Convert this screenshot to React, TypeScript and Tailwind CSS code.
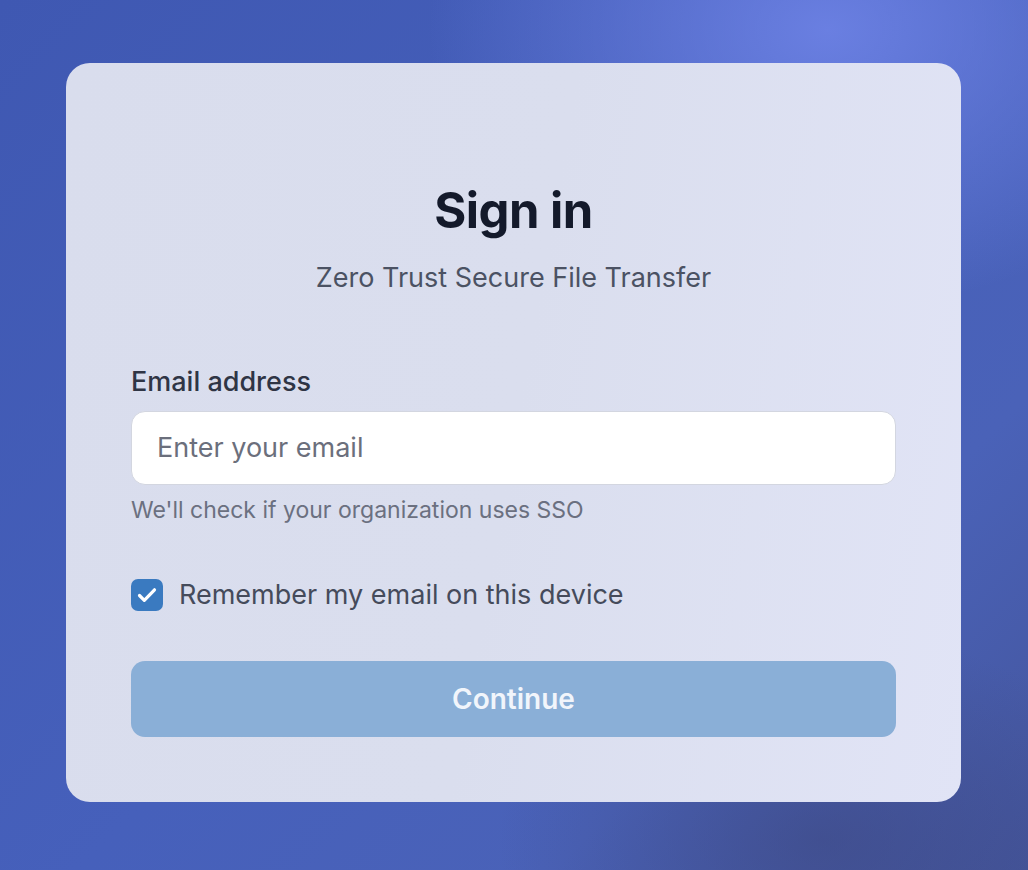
import React from "react";

export default function App() {
  return (
    <div
      className="relative w-[1028px] h-[870px] overflow-hidden flex items-start justify-center bg-[linear-gradient(135deg,#3f58b2_0%,#4660bb_50%,#4a62b8_75%,#44559c_100%)]"
      style={{ fontFamily: "Inter, 'Noto Sans', sans-serif" }}
    >
      <div className="pointer-events-none absolute -top-[250px] right-[-200px] w-[800px] h-[560px] rounded-full bg-[radial-gradient(closest-side,rgba(115,135,235,0.8),rgba(115,135,235,0))]" />
      <div className="pointer-events-none absolute bottom-[-180px] right-[-120px] w-[650px] h-[420px] rounded-full bg-[radial-gradient(closest-side,rgba(60,70,125,0.55),rgba(60,70,125,0))]" />
      <div className="relative mt-[63px] ml-[-1px] w-[895px] h-[739px] rounded-[24px] bg-[linear-gradient(100deg,#d9dded_0%,#dadeee_50%,#e1e4f6_100%)] px-[65px] pt-[119px] flex flex-col">
        <h1 className="text-center text-[49px] leading-[58px] font-bold text-[#141a2b] tracking-[-0.5px]">
          Sign in
        </h1>
        <p className="mt-[22px] text-center text-[27px] leading-[32px] text-[#4b5263]">
          Zero Trust Secure File Transfer
        </p>
        <label className="mt-[72px] text-[27px] leading-[32px] font-medium text-[#2f3545]">
          Email address
        </label>
        <div className="mt-[13px] h-[74px] w-full rounded-[14px] bg-white border border-[#d3d6e0] flex items-center pl-[25px]">
          <span className="text-[27px] text-[#6b6f7c]">Enter your email</span>
        </div>
        <p className="mt-[10px] text-[23px] leading-[30px] text-[#6b7080]">
          We'll check if your organization uses SSO
        </p>
        <div className="mt-[53px] flex items-center gap-[16px]">
          <div className="w-[32px] h-[32px] rounded-[7px] bg-[#3a7ac0] flex items-center justify-center">
            <svg className="w-[24px] h-[24px]" viewBox="0 0 24 24" fill="none">
              <path d="M4.5 12.5l4.8 4.8L19.5 6.8" stroke="white" strokeWidth="3.2" strokeLinecap="round" strokeLinejoin="round" />
            </svg>
          </div>
          <span className="text-[27px] leading-[34px] text-[#454b5b]">
            Remember my email on this device
          </span>
        </div>
        <button className="mt-[49px] h-[76px] w-full rounded-[14px] bg-[#8aafd7] text-[#f1f5fb] text-[28px] font-semibold">
          Continue
        </button>
      </div>
    </div>
  );
}
